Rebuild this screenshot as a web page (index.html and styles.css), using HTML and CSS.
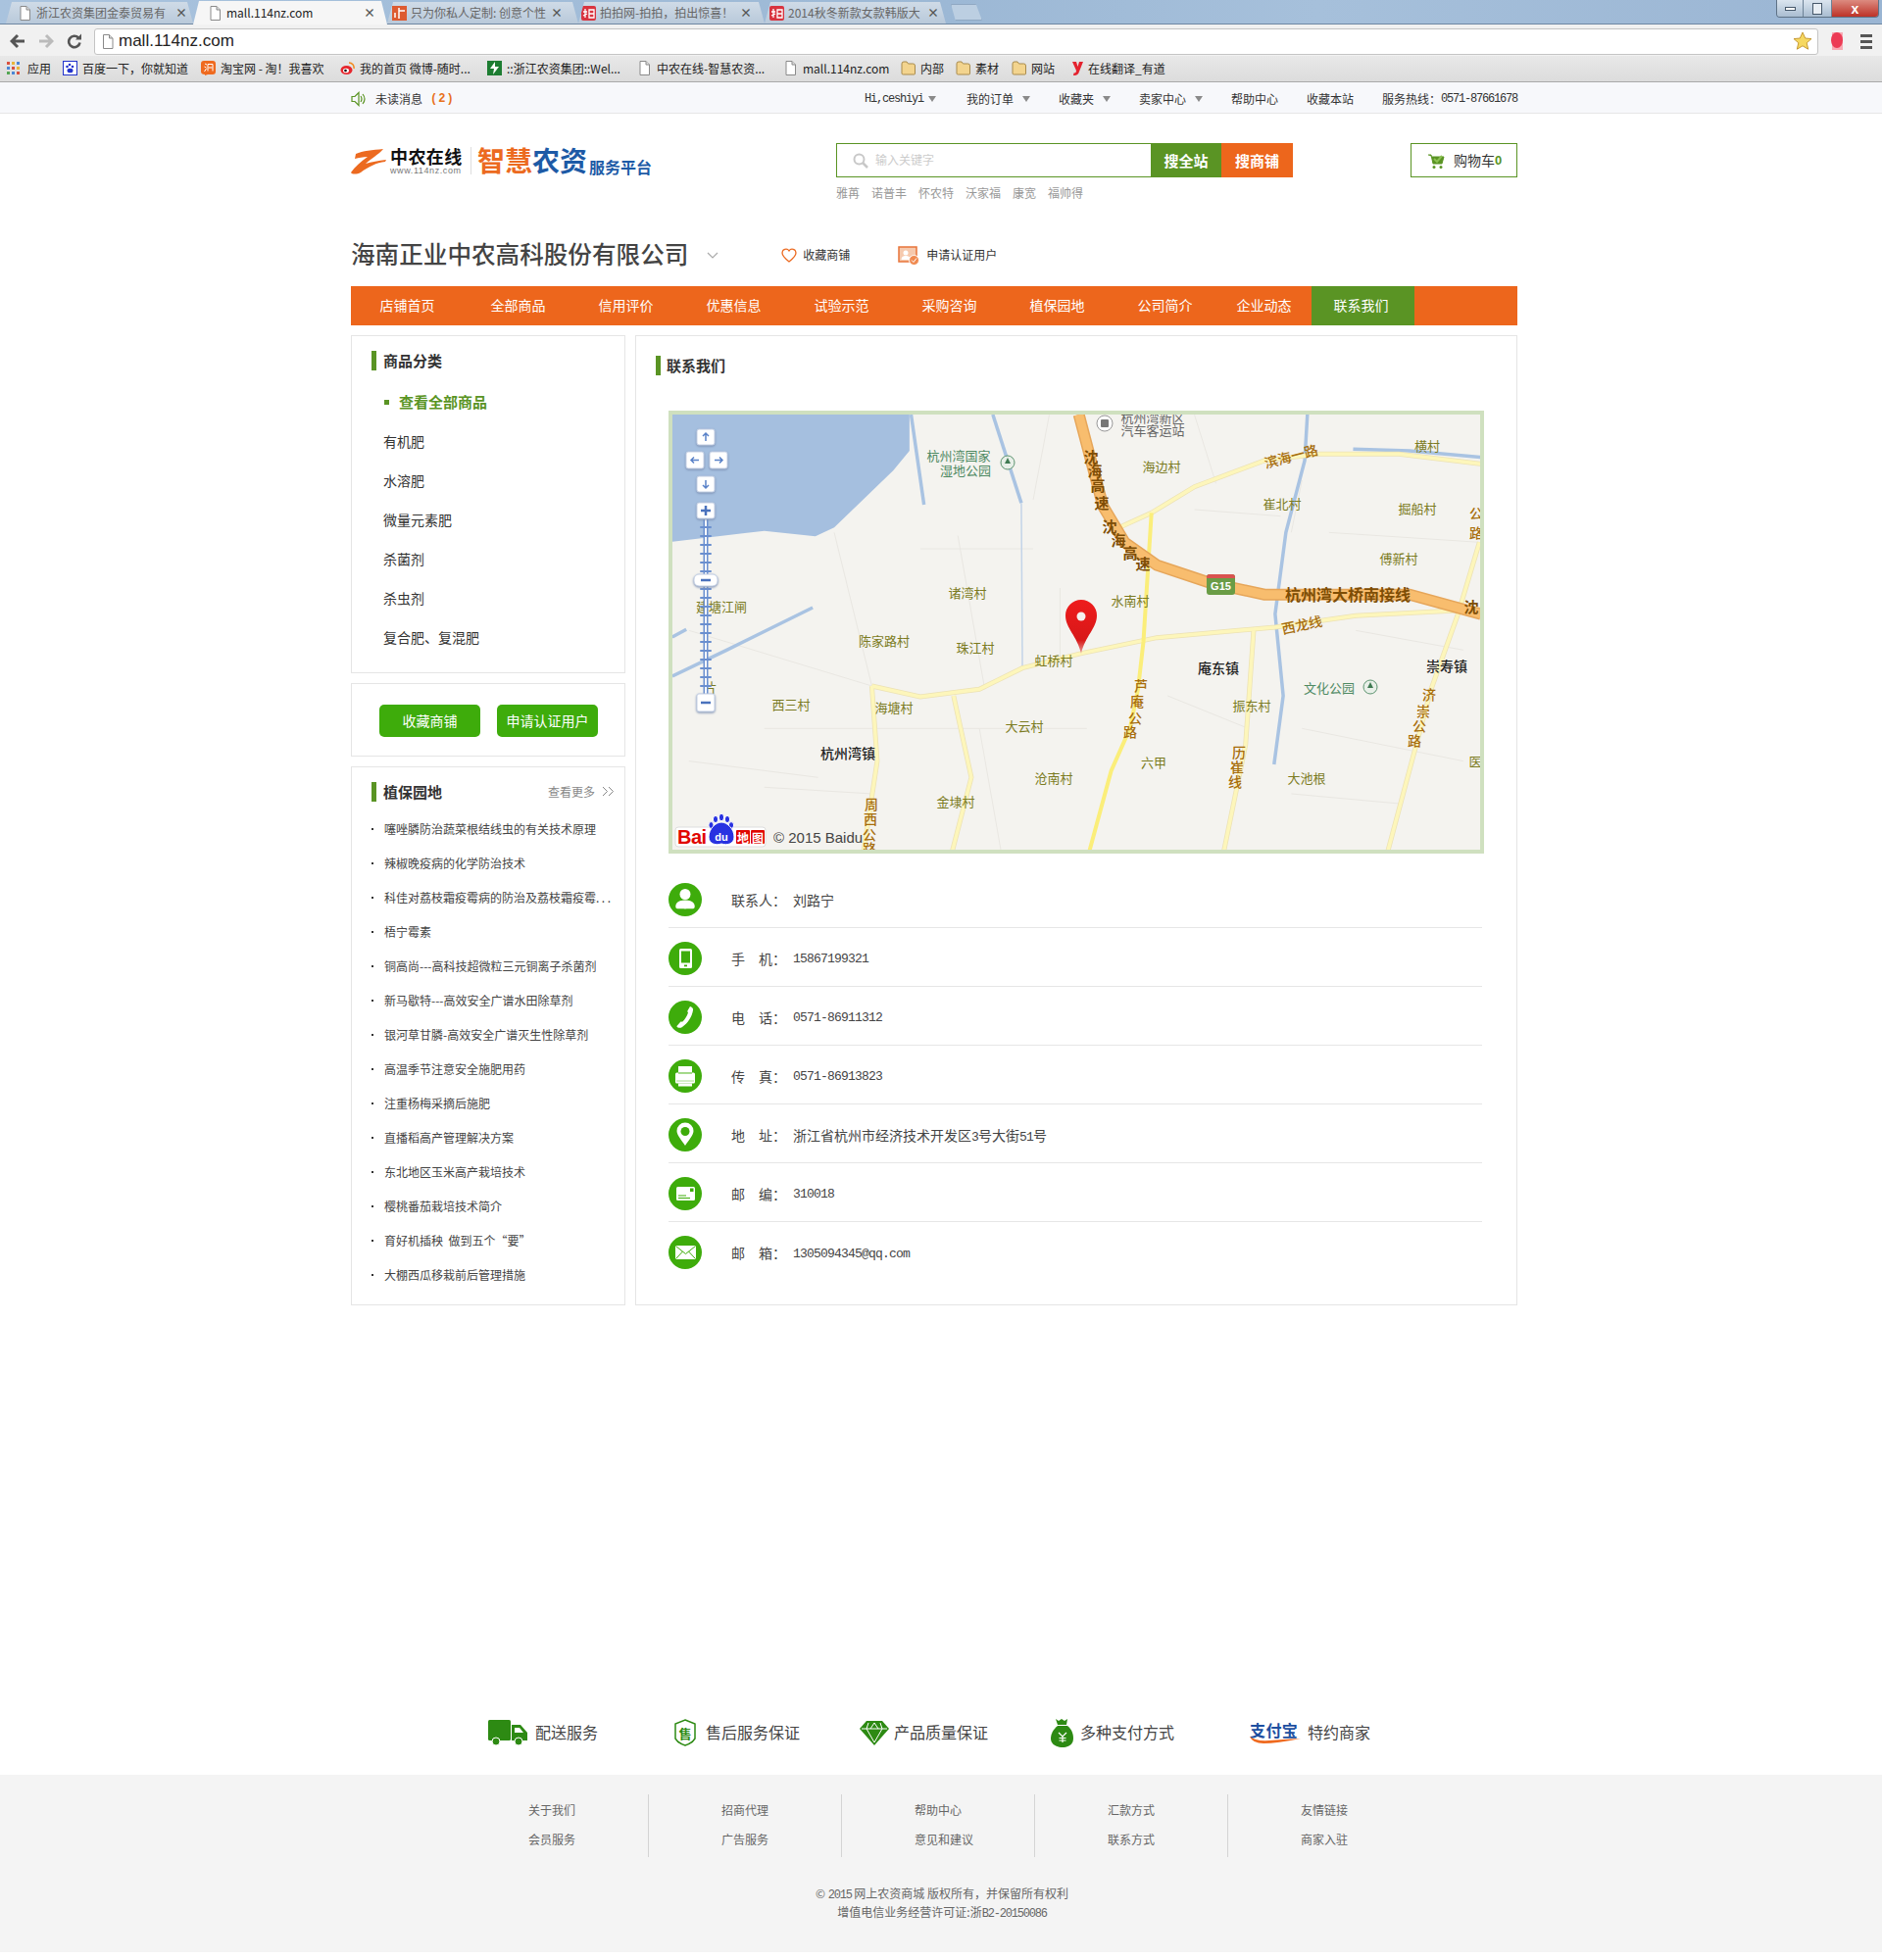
FILE: index.html
```html
<!DOCTYPE html>
<html lang="zh-CN">
<head>
<meta charset="utf-8">
<title>联系我们</title>
<link rel="stylesheet" href="styles.css">
</head>
<body>
<svg class="defs" width="0" height="0">
  <symbol id="doc" viewBox="0 0 12 15"><path d="M1.5 .5h6l3.5 3.5v10.500h-9.500z" fill="#fff" stroke="#8a8a8a"/><path d="M7.500 .5v3.500h3.500" fill="#ddd" stroke="#8a8a8a"/></symbol>
  <symbol id="folder" viewBox="0 0 15 15"><path d="M1 3q0-2 2-2h3l1.500 2h5q2 0 2 2v8q0 1-1 1h-11q-1.500 0-1.500-1z" fill="#f3d48e" stroke="#a98b4d"/></symbol>
  <symbol id="hong" viewBox="0 0 15 15"><rect width="15" height="15" rx="2" fill="#d8343f"/><path d="M4 3v9M2 6h4M2 10l4-2M8 4h5v8h-5zM8 8h5" stroke="#fff" fill="none" stroke-width="1.300"/></symbol>
</svg>

<div class="tabstrip">
  <div class="tab tab1"><svg class="tabicon"><use href="#doc"/></svg><span class="tabtext">浙江农资集团金泰贸易有</span><span class="tabx">×</span></div>
  <div class="tab tab-active"><svg class="tabicon"><use href="#doc"/></svg><span class="tabtext">mall.114nz.com</span><span class="tabx">×</span></div>
  <div class="tab tab3"><svg class="tabicon" viewBox="0 0 15 15"><rect width="15" height="15" fill="#dd5b31"/><path d="M7 2v11M7 5h6M3 7v5" stroke="#fff" stroke-width="1.500" fill="none"/></svg><span class="tabtext">只为你私人定制: 创意个性</span><span class="tabx">×</span></div>
  <div class="tab tab4"><svg class="tabicon"><use href="#hong"/></svg><span class="tabtext">拍拍网-拍拍，拍出惊喜！</span><span class="tabx">×</span></div>
  <div class="tab tab5"><svg class="tabicon"><use href="#hong"/></svg><span class="tabtext">2014秋冬新款女款韩版大</span><span class="tabx">×</span></div>
  <div class="tab-new"></div>
  <div class="winctl">
    <span class="win win-min"><i class="win-min-bar"></i></span>
    <span class="win win-max"><i class="win-max-box"></i></span>
    <span class="win win-close">x</span>
  </div>
</div>

<div class="toolbar">
  <svg class="navicon" viewBox="0 0 16 16"><path d="M8 2 2 8l6 6M2.500 8H15" fill="none" stroke="#555" stroke-width="3"/></svg>
  <svg class="navicon navicon-off" viewBox="0 0 16 16"><path d="m8 2 6 6-6 6M13.500 8H1" fill="none" stroke="#bbb" stroke-width="3"/></svg>
  <svg class="navicon" viewBox="0 0 16 16"><path d="M13.500 9.500a5.700 5.700 0 1 1-1.500-5" fill="none" stroke="#555" stroke-width="2.600"/><path d="M9 6.500h6v-6z" fill="#555"/></svg>
  <div class="addr">
    <svg class="addr-doc"><use href="#doc"/></svg>
    <span class="addr-text">mall.114nz.com</span>
    <svg class="addr-star" viewBox="0 0 20 20"><path d="m10 1 2.700 6 6.300.6-4.800 4.200 1.500 6.400L10 14.800l-5.700 3.400 1.500-6.400L1 7.600 7.300 7z" fill="#f6d860" stroke="#c79a35"/></svg>
  </div>
  <svg class="ext" viewBox="0 0 16 20"><path d="M3 1h11v18H3z" fill="#f7aab4"/><ellipse cx="8" cy="9" rx="6" ry="8" fill="#ec3b55"/></svg>
  <div class="burger"><i></i><i></i><i></i></div>
</div>

<div class="bookmarks">
  <span class="bm bm-apps"><svg class="bmicon" viewBox="0 0 13 13"><g fill="#d9503f"><rect width="3" height="3"/><rect x="5" width="3" height="3" fill="#e9b63a"/><rect x="10" width="3" height="3" fill="#4b87d6"/><rect y="5" width="3" height="3" fill="#4b87d6"/><rect x="5" y="5" width="3" height="3"/><rect x="10" y="5" width="3" height="3" fill="#e9b63a"/><rect y="10" width="3" height="3" fill="#53a653"/><rect x="5" y="10" width="3" height="3" fill="#4b87d6"/><rect x="10" y="10" width="3" height="3"/></g></svg>应用</span>
  <span class="bm bm-baidu"><svg class="bmicon" viewBox="0 0 15 15"><rect x=".5" y=".5" width="14" height="14" fill="#fff" stroke="#2233cc"/><circle cx="4.500" cy="6" r="1.300" fill="#2233cc"/><circle cx="7" cy="4" r="1.300" fill="#2233cc"/><circle cx="10" cy="6" r="1.300" fill="#2233cc"/><ellipse cx="7.500" cy="10" rx="3" ry="2.300" fill="#2233cc"/></svg>百度一下，你就知道</span>
  <span class="bm bm-tb"><svg class="bmicon" viewBox="0 0 15 15"><path d="M3 0h9q3 0 3 3v8q0 3-3 3H7l-3 1v-1q-4 0-4-3V3q0-3 3-3z" fill="#ef6a1f"/><path d="M4 3l2 1M3.500 6l2 1M3.500 11l2-3M7 3.500h5M7 3.500v7M12 3.500v7M7.500 7h4" stroke="#fff" fill="none"/></svg>淘宝网 - 淘！我喜欢</span>
  <span class="bm bm-wb"><svg class="bmicon" viewBox="0 0 15 15"><ellipse cx="6.500" cy="9.500" rx="6" ry="4.500" fill="#e6262d"/><ellipse cx="6" cy="10" rx="3" ry="2.300" fill="#fff"/><circle cx="5.500" cy="10" r="1.300"/><path d="M9 2a5 5 0 0 1 5 6" fill="none" stroke="#f28a1e" stroke-width="1.500"/></svg>我的首页 微博-随时...</span>
  <span class="bm bm-zj"><svg class="bmicon" viewBox="0 0 15 15"><rect width="15" height="15" fill="#1d7d32"/><path d="M8 1 3 8h4l-1 6 6-8H8z" fill="#fff"/></svg>::浙江农资集团::Wel...</span>
  <span class="bm bm-zn"><svg class="bmicon"><use href="#doc"/></svg>中农在线-智慧农资...</span>
  <span class="bm bm-ml"><svg class="bmicon"><use href="#doc"/></svg>mall.114nz.com</span>
  <span class="bm bm-nb"><svg class="bmicon"><use href="#folder"/></svg>内部</span>
  <span class="bm bm-sc"><svg class="bmicon"><use href="#folder"/></svg>素材</span>
  <span class="bm bm-wz"><svg class="bmicon"><use href="#folder"/></svg>网站</span>
  <span class="bm bm-yd"><svg class="bmicon" viewBox="0 0 15 15"><path d="M2 1h4l1.500 5L9 1h4L9 11q-1 4-5 4H3l.5-2.500Q6 13 6 10z" fill="#e4232f"/></svg>在线翻译_有道</span>
</div>

<div class="topbar">
  <div class="wrap topbar-in">
    <svg class="speaker" viewBox="0 0 16 16"><path d="M1 5.500h3l4-4v13l-4-4H1z" fill="none" stroke="#5a9424" stroke-width="1.200"/><path d="M10 5q2 3 0 6M12 3q4 5 0 10" fill="none" stroke="#5a9424" stroke-width="1.200"/></svg>
    <span class="msg">未读消息</span><span class="msg-count">(2)</span>
    <nav class="toplinks">
      <span class="tl tl-hi"><span class="mono">Hi,ceshiyi</span><i class="caret"></i></span>
      <span class="tl tl-wide">我的订单<i class="caret"></i></span>
      <span class="tl">收藏夹<i class="caret"></i></span>
      <span class="tl">卖家中心<i class="caret"></i></span>
      <span class="tl">帮助中心</span>
      <span class="tl">收藏本站</span>
      <span class="tl">服务热线：<span class="mono">0571-87661678</span></span>
    </nav>
  </div>
</div>

<div class="wrap">
  <header class="header">
    <div class="logo">
      <svg class="logo-z" viewBox="0 0 36 26"><path d="M5 5C12 2 22 1 33 0 28 6 20 10 15 15 21 13 28 12 36 11L35 13C26 14 18 18 10 24 6 26 1 26 0 24 4 18 10 13 17 8 12 8 8 9 4 10Z" fill="#ec6a20"/></svg>
      <div class="logo-cn">
        <div class="logo-name">中农在线</div>
        <div class="logo-url">www.114nz.com</div>
      </div>
      <span class="logo-sep"></span>
      <span class="logo-a">智慧</span><span class="logo-b">农资</span><span class="logo-c">服务平台</span>
    </div>
    <div class="search">
      <div class="search-row">
        <div class="search-input">
          <svg class="search-ico" viewBox="0 0 16 16"><circle cx="6.500" cy="6.500" r="5" fill="none" stroke="#c8c8c8" stroke-width="2"/><path d="m10 10 5 5" stroke="#c8c8c8" stroke-width="2.500"/></svg>
          <span>输入关键字</span>
        </div>
        <span class="sbtn sbtn-g">搜全站</span>
        <span class="sbtn sbtn-o">搜商铺</span>
      </div>
      <div class="hot"><span>雅苒</span><span>诺普丰</span><span>怀农特</span><span>沃家福</span><span>康宽</span><span>福帅得</span></div>
    </div>
    <div class="cart">
      <svg class="cart-ico" viewBox="0 0 18 18"><path d="M1 3h3l2 9h9l2-7H5" fill="#5a9424" stroke="#5a9424"/><path d="m7 7 3 3 5-6" fill="none" stroke="#8cc152" stroke-width="2"/><circle cx="7" cy="15.500" r="1.500" fill="#5a9424"/><circle cx="14" cy="15.500" r="1.500" fill="#5a9424"/></svg>
      <span>购物车</span><b class="cart-n">0</b>
    </div>
  </header>

  <div class="shop">
    <h1 class="shop-name">海南正业中农高科股份有限公司</h1>
    <svg class="shop-chev" viewBox="0 0 12 8"><path d="m1 1 5 5 5-5" fill="none" stroke="#aaa" stroke-width="1.200"/></svg>
    <span class="shop-act shop-fav"><svg class="heart" viewBox="0 0 16 15"><path d="M8 14C3 10 1 7.500 1 5a3.800 3.800 0 0 1 7-2 3.800 3.800 0 0 1 7 2c0 2.500-2 5-7 9z" fill="none" stroke="#ec6a20" stroke-width="1.300"/></svg>收藏商铺</span>
    <span class="shop-act shop-cert"><svg class="cert" viewBox="0 0 22 20"><rect x="1" y="1" width="18" height="15" fill="#f6c9ad" stroke="#e8743a" stroke-width="1.500"/><circle cx="8" cy="7" r="2.500" fill="#fff"/><path d="M3.500 14q0-4 4.500-4t4.500 4z" fill="#fff"/><circle cx="16.500" cy="14.500" r="5" fill="#f08a50" stroke="#fff"/><path d="m14 14.500 2 2 3-4" fill="none" stroke="#fff"/></svg>申请认证用户</span>
  </div>

  <nav class="mainnav">
    <a class="ni ni-1">店铺首页</a><a class="ni ni-2">全部商品</a><a class="ni">信用评价</a><a class="ni">优惠信息</a><a class="ni">试验示范</a><a class="ni">采购咨询</a><a class="ni">植保园地</a><a class="ni">公司简介</a><a class="ni ni-9">企业动态</a><a class="ni ni-on">联系我们</a>
  </nav>

  <div class="content">
    <aside class="side">
      <section class="box box-cat">
        <h3 class="ttl">商品分类</h3>
        <ul class="cat">
          <li class="cat-all">查看全部商品</li>
          <li>有机肥</li><li>水溶肥</li><li>微量元素肥</li><li>杀菌剂</li><li>杀虫剂</li><li>复合肥、复混肥</li>
        </ul>
      </section>
      <section class="box box-btn">
        <span class="gbtn">收藏商铺</span><span class="gbtn">申请认证用户</span>
      </section>
      <section class="box box-news">
        <div class="news-head">
          <h3 class="ttl">植保园地</h3>
          <span class="more">查看更多<svg class="more-ico" viewBox="0 0 13 11"><path d="m1 1 4.500 4.500L1 10M7 1l4.500 4.500L7 10" fill="none" stroke="#888"/></svg></span>
        </div>
        <ul class="news">
          <li>噻唑膦防治蔬菜根结线虫的有关技术原理</li>
          <li>辣椒晚疫病的化学防治技术</li>
          <li>科佳对荔枝霜疫霉病的防治及荔枝霜疫霉<span class="dots">...</span></li>
          <li>梧宁霉素</li>
          <li>铜高尚---高科技超微粒三元铜离子杀菌剂</li>
          <li>新马歇特---高效安全广谱水田除草剂</li>
          <li>银河草甘膦-高效安全广谱灭生性除草剂</li>
          <li>高温季节注意安全施肥用药</li>
          <li>注重杨梅采摘后施肥</li>
          <li>直播稻高产管理解决方案</li>
          <li>东北地区玉米高产栽培技术</li>
          <li>樱桃番茄栽培技术简介</li>
          <li>育好机插秧&nbsp;&nbsp;做到五个“要”</li>
          <li>大棚西瓜移栽前后管理措施</li>
        </ul>
      </section>
    </aside>

    <main class="panel">
      <h3 class="ttl ttl-panel">联系我们</h3>
      <div class="map">
        <svg class="map-svg" viewBox="0 0 824 444">
          <rect width="824" height="444" fill="#f4f3ef"/>
          <g transform="translate(-16,-13) scale(.5486,.3333)">
            <g class="grid">
              <path d="M330 400 400 870M560 410 610 880M490 450 700 450M750 570V800M60 700 400 870M200 1000H800M600 1000 640 1373M950 900 1100 1000M1200 240 1180 400M1250 400 1530 430M1200 1000 1500 1100M1000 330 1160 350M200 1180 400 1200M1300 700 1500 760M1180 1200 1380 1230M60 1100 300 1150M1000 40 1040 250M730 40 700 300"/>
            </g>
            <path class="water-fill" d="M29 39H470V150L440 210 330 385 295 412 200 395 29 428Z"/>
            <g class="water">
              <path d="M473 39 497 315"/>
              <path d="M625 39 678 310"/>
              <path d="M1210 39 1205 180 1170 400 1150 650 1165 900 1148 1110"/>
              <path d="M1295 145 1400 150 1533 170"/>
              <path d="M29 840 130 760 290 630"/>
              <path d="M29 720 55 697"/>
            </g>
            <path class="water-thin" d="M678 310 680 810"/>
            <g class="road-case">
              <path d="M400 870 490 903 600 880 680 815 790 770 930 722 1150 690 1300 655 1533 635"/>
              <path d="M860 385 920 340 1000 260 1130 180 1230 160 1380 160 1533 190"/>
              <path d="M400 870 410 1100 385 1373"/>
              <path d="M552 900 585 1150 550 1373"/>
              <path d="M1110 700 1095 1050 1055 1373"/>
              <path d="M1530 430 1490 650 1440 880 1360 1373"/>
            </g>
            <g class="road">
              <path d="M400 870 490 903 600 880 680 815 790 770 930 722 1150 690 1300 655 1533 635"/>
              <path d="M860 385 920 340 1000 260 1130 180 1230 160 1380 160 1533 190"/>
              <path d="M400 870 410 1100 385 1373"/>
              <path d="M552 900 585 1150 550 1373"/>
              <path d="M1110 700 1095 1050 1055 1373"/>
              <path d="M1530 430 1490 650 1440 880 1360 1373"/>
            </g>
            <path class="road-y" d="M920 340 905 735 895 880 880 1000 845 1130 805 1373"/>
            <path class="hw-case" d="M785 39 830 320 870 430 930 500 1030 555 1130 590 1400 590 1533 650"/>
            <path class="hw" d="M785 39 830 320 870 430 930 500 1030 555 1130 590 1400 590 1533 650"/>
          </g>

          <text class="mt mc" x="490" y="2">杭州湾新区</text>
          <text class="mt mc" x="490" y="15">汽车客运站</text>
          <circle cx="441" cy="9" r="8" fill="#fff" stroke="#999"/><rect x="437" y="5" width="8" height="8" rx="1" fill="#777"/>
          <text class="mt mg" x="292" y="41">杭州湾国家</text>
          <text class="mt mg" x="299" y="56">湿地公园</text>
          <circle cx="342" cy="49" r="7" fill="#e8efe8" stroke="#5d9470"/><path d="m342 44 3 6h-6z" fill="#3f7a52"/>
          <text class="mt" x="499" y="52">海边村</text>
          <text class="mt mo" x="631" y="42" transform="rotate(-15 631 42)">滨海一路</text>
          <text class="mt" x="770" y="31">横村</text>
          <text class="mt" x="622" y="90">崔北村</text>
          <text class="mt" x="760" y="95">掘船村</text>
          <text class="mt" x="741" y="146">傅新村</text>
          <text class="mt" x="301" y="181">诸湾村</text>
          <text class="mt" x="467" y="189">水南村</text>
          <text class="mt" x="50" y="195">建塘江闸</text>
          <text class="mt" x="216" y="230">陈家路村</text>
          <text class="mt" x="309" y="237">珠江村</text>
          <text class="mt" x="389" y="250">虹桥村</text>
          <text class="mt mk" x="557" y="258">庵东镇</text>
          <text class="mt mk" x="790" y="256">崇寿镇</text>
          <text class="mt mg" x="670" y="278">文化公园</text>
          <circle cx="712" cy="278" r="7" fill="#e8efe8" stroke="#5d9470"/><path d="m712 273 3 6h-6z" fill="#3f7a52"/>
          <text class="mt" x="591" y="296">振东村</text>
          <text class="mt" x="121" y="295">西三村</text>
          <text class="mt" x="226" y="298">海塘村</text>
          <text class="mt" x="359" y="317">大云村</text>
          <text class="mt mk" x="179" y="345">杭州湾镇</text>
          <text class="mt" x="491" y="354">六甲</text>
          <text class="mt" x="389" y="370">沧南村</text>
          <text class="mt" x="647" y="370">大池根</text>
          <text class="mt" x="289" y="394">金埭村</text>
          <text class="mt" x="819" y="353">医</text>
          <text class="mt" x="39" y="277">片</text>

          <text class="mt mh mh-l" x="689" y="183">杭州湾大桥南接线</text>
          <text class="mt mh" x="815" y="195">沈</text>
          <text class="mt mh" x="427" y="42">沈</text><text class="mt mh" x="431" y="56">海</text><text class="mt mh" x="434" y="71">高</text><text class="mt mh" x="438" y="89">速</text>
          <text class="mt mh" x="446" y="113">沈</text><text class="mt mh" x="455" y="127">海</text><text class="mt mh" x="467" y="140">高</text><text class="mt mh" x="480" y="151">速</text>
          <text class="mt mo" x="642" y="214" transform="rotate(-12 642 214)">西龙线</text>
          <text class="mt mo" x="478" y="276">芦</text><text class="mt mo" x="474" y="292">庵</text><text class="mt mo" x="472" y="309">公</text><text class="mt mo" x="467" y="323">路</text>
          <text class="mt mo" x="578" y="344">历</text><text class="mt mo" x="576" y="359">崔</text><text class="mt mo" x="574" y="374">线</text>
          <text class="mt mo" x="203" y="397">周</text><text class="mt mo" x="202" y="412">西</text><text class="mt mo" x="201" y="428">公</text><text class="mt mo" x="201" y="442">路</text>
          <text class="mt mo" x="772" y="285">济</text><text class="mt mo" x="766" y="302">崇</text><text class="mt mo" x="762" y="317">公</text><text class="mt mo" x="757" y="332">路</text>
          <text class="mt mo" x="820" y="100">公</text><text class="mt mo" x="820" y="120">路</text>

          <rect x="545" y="163" width="29" height="21" rx="3" fill="#6a9c46"/>
          <path d="M545 166q0-3 3-3h23q3 0 3 3v1h-29z" fill="#d9534f"/>
          <text class="mt shield" x="559.500" y="175">G15</text>

          <g class="zoomctl">
            <path class="slider" d="M34 107V285"/>
            <path class="slider-in" d="M34 107V285"/>
            <path class="slider-dash" d="M29 115H39M29 124H39M29 133H39M29 142H39M29 151H39M29 160H39M29 178H39M29 187H39M29 196H39M29 205H39M29 214H39M29 223H39M29 232H39M29 241H39M29 250H39M29 259H39M29 268H39M29 277H39"/>
            <rect class="zbtn" x="25" y="15" width="18" height="16" rx="2"/>
            <rect class="zbtn" x="14" y="38" width="18" height="17" rx="2"/>
            <rect class="zbtn" x="38" y="38" width="18" height="17" rx="2"/>
            <rect class="zbtn" x="25" y="63" width="18" height="16" rx="2"/>
            <rect class="zbtn" x="25" y="90" width="18" height="16" rx="2"/>
            <rect class="zbtn" x="25" y="285" width="18" height="18" rx="2"/>
            <rect class="zbtn" x="22" y="163" width="24" height="12" rx="5"/>
            <path class="zarrow" d="M34 19V27M31 22l3-3 3 3M19 46.500H27M22 43.500l-3 3 3 3M43 46.500H51M48 43.500l3 3-3 3M34 67V75M31 72l3 3 3-3"/>
            <path class="zsign" d="M29 98H39M34 93V103M29 294H39M29 169H39"/>
          </g>

          <g class="pin">
            <path d="M417 244C413 226 401 218 401 205A16 16 0 0 1 433 205C433 218 421 226 417 244Z" fill="url(#pg)"/>
            <circle cx="417" cy="206" r="4.500" fill="#f6f0ee"/>
          </g>
          <defs>
            <linearGradient id="pg" x1="0" y1="0" x2="0" y2="1"><stop offset="0" stop-color="#ee1c1c"/><stop offset=".75" stop-color="#d81818"/><stop offset="1" stop-color="#e8a09c"/></linearGradient>
          </defs>

          <g class="baidu">
            <rect x="3" y="421" width="92" height="20" rx="3" fill="#fff" stroke="#ddd"/>
            <text class="bd-bai" x="5" y="438">Bai</text>
            <g fill="#2932e1" stroke="#fff">
              <ellipse cx="44" cy="413" rx="2.600" ry="3.600"/><ellipse cx="50" cy="411" rx="2.600" ry="3.800"/><ellipse cx="56" cy="413" rx="2.600" ry="3.600"/><ellipse cx="39.500" cy="419" rx="2.600" ry="3.400"/><ellipse cx="60" cy="419" rx="2.600" ry="3.400"/>
              <path d="M50 416c-6 0-13 7-13 15 0 7 7 9 13 7 6 2 13 0 13-7 0-8-7-15-13-15z"/>
            </g>
            <text class="bd-du" x="50" y="435">du</text>
            <rect x="65" y="424" width="14" height="14" fill="#e10601" rx="1"/><text class="bd-map" x="72" y="431.500">地</text>
            <rect x="80" y="424" width="14" height="14" fill="#e10601" rx="1"/><text class="bd-map" x="87" y="431.500">图</text>
            <text class="bd-c" x="103" y="437">© 2015 Baidu</text>
          </g>
        </svg>
      </div>

      <div class="contact">
        <div class="row"><svg class="cico" viewBox="0 0 34 34"><circle cx="17" cy="17" r="17"/><circle class="w" cx="17" cy="11.500" r="5.500"/><path class="w" d="M8 26c-1-1-1-3 0-5 2-3 5-3.500 9-3.500s7 .5 9 3.500c1 2 1 4 0 5-1 .5-17 .5-18 0z"/></svg><span class="lb">联系人：</span><span class="val">刘路宁</span></div>
        <div class="row"><svg class="cico" viewBox="0 0 34 34"><circle cx="17" cy="17" r="17"/><rect class="w" x="11" y="7" width="13" height="20" rx="1.500"/><rect x="13" y="9.500" width="9" height="12"/><rect x="16" y="23.500" width="3" height="1.800"/></svg><span class="lb">手　机：</span><span class="num">15867199321</span></div>
        <div class="row"><svg class="cico" viewBox="0 0 34 34"><circle cx="17" cy="17" r="17"/><path class="w" d="M22 6c2.500 1 3.500 2 3 4-1 6-5 13-11 17-1.500 1-3 1-4.500.5-.8-.5-1.200-1.200-1-1.500l3.500-4c.5-.5 1-.5 2-.2 2.500-2 5-6 6-9.500-.5-.5-1-1-.5-2z"/></svg><span class="lb">电　话：</span><span class="num">0571-86911312</span></div>
        <div class="row"><svg class="cico" viewBox="0 0 34 34"><circle cx="17" cy="17" r="17"/><path class="w" d="M10 7h14v6H10z"/><path class="w" d="M7 15q0-1.500 1.500-1.500h17Q27 13.500 27 15v8q0 1.500-1.500 1.500h-17Q7 24.500 7 23z"/><rect class="w" x="10" y="24.500" width="14" height="3"/><path d="M10 14.500h14M8 22h18" stroke="#a8dc8e" fill="none"/></svg><span class="lb">传　真：</span><span class="num">0571-86913823</span></div>
        <div class="row"><svg class="cico" viewBox="0 0 34 34"><circle cx="17" cy="17" r="17"/><path class="w" d="M17 28C13 22 8.500 17 8.500 13a8.500 8.500 0 0 1 17 0c0 4-4.500 9-8.500 15z"/><circle cx="17" cy="13.500" r="4.500"/></svg><span class="lb">地　址：</span><span class="val">浙江省杭州市经济技术开发区<span class="num">3</span>号大街<span class="num">51</span>号</span></div>
        <div class="row"><svg class="cico" viewBox="0 0 34 34"><circle cx="17" cy="17" r="17"/><rect class="w" x="8" y="10" width="19" height="14" rx="1.500"/><rect x="22" y="11.500" width="3.500" height="3.500"/><path d="M10 19h8M10 21.500h12" stroke="#3eac0b" fill="none"/></svg><span class="lb">邮　编：</span><span class="num">310018</span></div>
        <div class="row"><svg class="cico" viewBox="0 0 34 34"><circle cx="17" cy="17" r="17"/><rect class="w" x="7" y="10" width="21" height="14" rx="1"/><path d="m7.500 10.500 10 8 10-8M7.500 23.500l7-7.500M27.500 23.500l-7-7.500" stroke="#3eac0b" fill="none"/></svg><span class="lb">邮　箱：</span><span class="num">1305094345@qq.com</span></div>
      </div>
    </main>
  </div>
</div>

<div class="services">
  <span class="svc svc-1"><svg class="svc-truck" viewBox="0 0 40 26"><rect y="0" width="23" height="21" rx="1.500"/><path d="M24 5h9l7 8v8H24z"/><path d="M27 8h5l4 5h-9z" fill="#fff"/><circle cx="8" cy="22" r="4" stroke="#fff"/><circle cx="31" cy="22" r="4" stroke="#fff"/></svg>配送服务</span>
  <span class="svc svc-2"><svg class="svc-shield" viewBox="0 0 22 28"><path d="M11 1 21 5v15q-3 5-10 7Q4 25 1 20V5z" fill="#fff" stroke="#2d8a13" stroke-width="1.500"/><text class="shield-t" x="11" y="14">售</text></svg>售后服务保证</span>
  <span class="svc svc-3"><svg class="svc-gem" viewBox="0 0 30 26"><path d="M7 1h16l7 8-15 17L0 9z"/><path d="M2 9h26M9 3 7 9l8 14 8-14-2-6M15 3 11 9M15 3l4 6" fill="none" stroke="#fff"/></svg>产品质量保证</span>
  <span class="svc svc-4"><svg class="svc-bag" viewBox="0 0 23 30"><path d="M5 1l3 2 3-2 3 2 3-2-1 6H7z"/><path d="M7 8h10c5 4 6 9 6 13 0 6-5 9-11 9S0 27 0 21c0-4 2-9 7-13z"/><path d="m8 15 4 4 4-4M12 19v6M8.500 20.500h7M8.500 23h7" fill="none" stroke="#fff" stroke-width="1.200"/></svg>多种支付方式</span>
  <span class="svc svc-5"><span class="alipay"><span class="alipay-t">支付宝</span><svg class="alipay-s" viewBox="0 0 52 10"><path d="M0 2Q3 9 14 9q14 0 38-5-20 1-32 2Q6 7 0 2z" fill="#ef6a1f"/></svg></span>特约商家</span>
</div>

<footer class="footer">
  <div class="fcols">
    <div class="fcol"><a>关于我们</a><a>会员服务</a></div>
    <div class="fcol"><a>招商代理</a><a>广告服务</a></div>
    <div class="fcol"><a>帮助中心</a><a>意见和建议</a></div>
    <div class="fcol"><a>汇款方式</a><a>联系方式</a></div>
    <div class="fcol"><a>友情链接</a><a>商家入驻</a></div>
  </div>
  <p class="copy">© <span class="mono">2015</span> 网上农资商城 版权所有，并保留所有权利</p>
  <p class="copy">增值电信业务经营许可证:浙<span class="mono">B2-20150086</span></p>
</footer>
</body>
</html>
```

FILE: styles.css
```css
* { box-sizing: border-box; }
html, body { margin: 0; padding: 0; }
body {
  width: 1920px;
  height: 2000px;
  overflow: hidden;
  background: #fff;
  color: #333;
  font: 12px/1.4 "Noto Sans CJK SC", "Liberation Sans", sans-serif;
}
h1, h3, p, ul { margin: 0; padding: 0; font-weight: normal; }
ul { list-style: none; }
.defs { position: absolute; }
.wrap { width: 1190px; margin-left: 358px; }
.mono { font: 12px "Liberation Mono", monospace; letter-spacing: -1.200px; }

/* browser chrome */
.tabstrip {
  display: flex;
  align-items: flex-end;
  height: 25px;
  padding-left: 6px;
  background: linear-gradient(90deg, #a9c3de, #9cb8d5 50%, #a6c0db 70%, #9ab5d3);
  border-bottom: 1px solid #6f88a3;
}
.tab {
  display: flex;
  align-items: center;
  flex: none;
  width: 191px;
  height: 22px;
  background: linear-gradient(#cfdbe7, #b9c9da);
  clip-path: polygon(0 100%, 6px 0, calc(100% - 6px) 0, 100% 100%);
  color: #666;
}
.tab1 { padding: 0 5px 0 12px; }
.tab-active { width: 198px; height: 24px; background: #f6f6f6; color: #222; margin-bottom: -1px; padding: 0 11px 0 15px; }
.tab3 { width: 195px; padding: 0 15px 0 5px; }
.tab4 { width: 190px; padding: 0 12px 0 3px; }
.tab5 { width: 185px; padding: 0 6px 0 5px; }
.tabicon { flex: none; width: 15px; height: 15px; margin-right: 4px; }
.tabtext { flex: 1; min-width: 0; white-space: nowrap; font-size: 12px; }
.tabx { flex: none; width: 14px; text-align: center; font-weight: 700; color: #555; }
.tab-new {
  width: 32px;
  height: 17px;
  margin: 0 0 3px 5px;
  background: #bccfe2;
  border: 1px solid #8fa8c2;
  clip-path: polygon(0 0, 80% 0, 100% 100%, 15% 100%);
}
.winctl {
  display: flex;
  align-self: flex-start;
  margin-left: auto;
  margin-right: 3px;
  height: 18px;
  border: 1px solid #5e7286;
  border-top: 0;
  border-radius: 0 0 4px 4px;
  overflow: hidden;
}
.win { display: flex; align-items: center; justify-content: center; height: 100%; background: linear-gradient(#dbe5ef, #a9bdd1); border-right: 1px solid #6d8297; }
.win-min { width: 27px; }
.win-max { width: 29px; }
.win-close { width: 47px; border: 0; background: linear-gradient(#dc8b80, #bd3227); color: #fff; font: 700 14px "Liberation Sans", sans-serif; }
.win-min-bar { width: 11px; height: 4px; background: #fff; border: 1px solid #46586a; }
.win-max-box { width: 10px; height: 12px; background: #e8eef4; border: 1px solid #46586a; }

.toolbar {
  display: flex;
  align-items: center;
  height: 32px;
  padding: 2px 8px 0 10px;
  background: #f1f1f1;
}
.navicon { flex: none; width: 16px; height: 16px; margin-right: 13px; }
.addr {
  display: flex;
  align-items: center;
  flex: none;
  width: 1759px;
  height: 27px;
  margin-left: -1px;
  padding: 0 5px 0 7px;
  background: #fff;
  border: 1px solid #c4c4c4;
  border-radius: 3px;
}
.addr-doc { width: 12px; height: 15px; margin-right: 5px; flex: none; }
.addr-text { font: 17px "Liberation Sans", sans-serif; color: #222; }
.addr-star { width: 20px; height: 20px; margin-left: auto; }
.ext { flex: none; width: 16px; height: 20px; margin-left: 11px; }
.burger { display: flex; flex-direction: column; gap: 3px; margin-left: 16px; }
.burger i { display: block; width: 12px; height: 3px; background: #555; }

.bookmarks {
  display: flex;
  align-items: center;
  height: 27px;
  background: linear-gradient(#e8e8e8, #dcdcdc);
  border-bottom: 1px solid #a9a9a9;
  color: #222;
  white-space: nowrap;
}
.bm { display: flex; align-items: center; flex: none; }
.bmicon { flex: none; width: 15px; height: 15px; margin-right: 5px; }
.bm-apps { margin-left: 7px; width: 57px; }
.bm-apps .bmicon { width: 13px; height: 13px; margin-right: 8px; }
.bm-baidu { width: 141px; }
.bm-tb { width: 142px; }
.bm-wb { width: 150px; }
.bm-zj { width: 153px; }
.bm-zn { width: 149px; }
.bm-ml { width: 120px; }
.bm-nb { width: 56px; }
.bm-sc { width: 57px; }
.bm-wz { width: 60px; }
.bm-yd { width: 100px; }
.bm-yd .bmicon { margin-right: 3px; }

.topbar { height: 32px; background: #f7f8fb; border-bottom: 1px solid #e6e6e6; }
.topbar-in { display: flex; align-items: center; height: 100%; padding-top: 3px; }
.speaker { flex: none; width: 16px; height: 16px; margin-right: 9px; }
.msg { color: #333; }
.msg-count { margin-left: 8px; color: #e8701a; font: 700 12px "Liberation Mono", monospace; letter-spacing: 1px; }
.toplinks { display: flex; align-items: center; gap: 29px; margin-left: auto; color: #333; white-space: nowrap; }
.tl { display: flex; align-items: center; }
.tl-hi .caret { margin-left: 5px; }
.tl-wide { margin-left: 2px; }
.caret { display: block; width: 0; height: 0; margin-left: 9px; border: 4px solid transparent; border-top: 6px solid #8a8a8a; border-bottom: 0; }

/* header */
.header { display: flex; align-items: flex-start; height: 109px; padding-top: 30px; }
.logo { display: flex; align-items: center; flex: none; width: 495px; height: 35px; }
.logo-z { flex: none; width: 36px; height: 26px; margin-top: 2px; }
.logo-cn { flex: none; width: 82px; margin-left: 4px; }
.logo-name { font-size: 18px; font-weight: 700; line-height: 20px; color: #111; letter-spacing: .4px; }
.logo-url { font: 9px/10px "Liberation Sans", sans-serif; color: #777; letter-spacing: .6px; }
.logo-sep { flex: none; width: 1px; height: 28px; margin-right: 6px; background: #ddd; }
.logo-a, .logo-b { font-size: 28px; font-weight: 700; line-height: 35px; }
.logo-a { color: #ec6a20; }
.logo-b { color: #1d5aa6; }
.logo-c { margin: 12px 0 0 2px; font-size: 16px; font-weight: 700; line-height: 20px; color: #1d5aa6; }
.search { flex: none; width: 466px; }
.search-row { display: flex; height: 35px; }
.search-input { display: flex; align-items: center; width: 321px; padding-left: 16px; border: 1.5px solid #5a9424; border-right: 0; color: #ccc; }
.search-ico { width: 16px; height: 16px; margin-right: 7px; }
.sbtn { display: flex; align-items: center; justify-content: center; color: #fff; font-size: 15px; font-weight: 700; }
.sbtn-g { width: 72px; background: #5a9424; }
.sbtn-o { width: 73px; background: #ed661c; }
.hot { display: flex; gap: 12px; margin-top: 7px; color: #999; line-height: 17px; }
.cart { display: flex; align-items: center; width: 109px; height: 35px; margin-left: auto; padding-left: 16px; border: 1.5px solid #5a9424; font-size: 14px; color: #333; }
.cart-ico { width: 18px; height: 18px; margin-right: 9px; }
.cart-n { color: #5a9424; font: 700 13px "Liberation Sans", sans-serif; }

.shop { display: flex; align-items: center; height: 67px; padding-bottom: 2px; }
.shop-name { font-size: 24.600px; font-weight: 500; color: #444; white-space: nowrap; line-height: 36px; }
.shop-chev { flex: none; width: 12px; height: 8px; margin: 6px 0 0 19px; }
.shop-act { display: flex; align-items: center; margin-top: 6px; color: #333; }
.shop-fav { margin-left: 64px; }
.shop-cert { margin-left: 49px; }
.heart { width: 16px; height: 15px; margin-right: 6px; }
.cert { width: 22px; height: 20px; margin-right: 7px; }

.mainnav { display: flex; height: 40px; background: #ed661c; }
.ni { display: flex; align-items: center; padding: 0 27px; color: #fff; font-size: 14px; }
.ni-1 { margin-left: 2.500px; }
.ni-2 { margin-left: 3px; }
.ni-9 { padding: 0 20px 0 18px; }
.ni-on { padding: 0 26px 0 23px; background: #5a9424; }

.content { display: flex; gap: 10px; margin-top: 10px; }
.side { display: flex; flex-direction: column; gap: 10px; flex: none; width: 280px; }
.box { border: 1px solid #e5e5e5; padding: 15px 10px 0 20px; }
.ttl { height: 20px; padding-left: 7px; border-left: 5px solid #5a9424; font-size: 15px; font-weight: 700; line-height: 20px; color: #333; }
.box-cat { height: 345px; }
.cat { margin-top: 12px; }
.cat li { height: 40px; padding-left: 12px; font-size: 14px; line-height: 40px; color: #333; }
.cat .cat-all { position: relative; padding-left: 28px; color: #5a9424; font-size: 15px; font-weight: 700; }
.cat-all::before { content: ""; position: absolute; left: 13px; top: 18px; width: 5px; height: 5px; background: #5a9424; }
.box-btn { display: flex; gap: 17px; height: 75px; padding: 21px 0 0 28px; }
.gbtn { display: flex; align-items: center; justify-content: center; width: 103px; height: 33px; border-radius: 5px; background: #3eac0b; color: #fff; font-size: 14px; }
.box-news { height: 550px; }
.news-head { display: flex; align-items: center; justify-content: space-between; }
.more { display: flex; align-items: center; color: #888; }
.more-ico { width: 13px; height: 11px; margin-left: 7px; }
.news { margin-top: 10px; }
.news li { position: relative; height: 35px; padding-left: 13px; font-size: 12px; line-height: 35px; color: #444; white-space: nowrap; }
.news li::before { content: ""; position: absolute; left: 0; top: 17px; width: 2px; height: 2px; background: #333; }
.dots { letter-spacing: 2.500px; }

.panel { flex: none; width: 900px; height: 990px; padding: 20px 33px 0 20px; border: 1px solid #e5e5e5; }
.ttl-panel { padding-left: 6px; }
.map { width: 832px; height: 452px; margin: 36px 0 0 13px; border: 4px solid #cfe0bf; }
.map-svg { display: block; width: 824px; height: 444px; }

.grid path { fill: none; stroke: #e9e7e2; stroke-width: 1; vector-effect: non-scaling-stroke; }
.water-fill { fill: #a5bfdf; }
.water path { fill: none; stroke: #a9c3e2; stroke-width: 3.500; vector-effect: non-scaling-stroke; }
.water-thin { fill: none; stroke: #c3d4e8; stroke-width: 1.500; vector-effect: non-scaling-stroke; }
.road-case path { fill: none; stroke: #ece2b4; stroke-width: 5; vector-effect: non-scaling-stroke; }
.road path { fill: none; stroke: #fdf6bb; stroke-width: 3.500; vector-effect: non-scaling-stroke; }
.road-y { fill: none; stroke: #fbee7a; stroke-width: 4; vector-effect: non-scaling-stroke; }
.hw-case { fill: none; stroke: #e6a65a; stroke-width: 12; vector-effect: non-scaling-stroke; }
.hw { fill: none; stroke: #f8bd6e; stroke-width: 9; vector-effect: non-scaling-stroke; }

.mt { font-family: "Noto Sans CJK SC", sans-serif; font-size: 13px; fill: #7b7b22; text-anchor: middle; dominant-baseline: central; }
.mc { fill: #666; }
.mg { fill: #4f8a63; }
.mk { fill: #222; font-size: 14px; font-weight: 500; }
.mo { fill: #a76d0c; font-size: 14px; font-weight: 500; }
.mh { fill: #7e4d05; font-size: 15px; font-weight: 700; }
.mh-l { font-size: 16px; }
.shield { fill: #fff; font: 700 11px "Liberation Sans", sans-serif; }
.slider { stroke: #6a8fcf; stroke-width: 5; fill: none; }
.slider-in { stroke: #fff; stroke-width: 2; fill: none; }
.slider-dash { stroke: #6a8fcf; stroke-width: 2; stroke-linecap: round; fill: none; }
.zbtn { fill: #fff; stroke: #c3cfe4; filter: drop-shadow(0 1px 1px #7a8db0); }
.zarrow { fill: none; stroke: #5a82c8; stroke-width: 1.500; }
.zsign { fill: none; stroke: #4a72bd; stroke-width: 2.500; }
.bd-bai { font: 700 20px "Liberation Sans", sans-serif; fill: #e10601; letter-spacing: -.5px; }
.bd-du { font: 700 11px "Liberation Sans", sans-serif; fill: #fff; text-anchor: middle; }
.bd-map { font: 700 12px "Noto Sans CJK SC", sans-serif; fill: #fff; text-anchor: middle; dominant-baseline: central; }
.bd-c { font: 15px "Liberation Sans", sans-serif; fill: #444; }

.contact { margin: 16px 0 0 13px; }
.row { display: flex; align-items: center; width: 830px; height: 60px; padding-top: 2px; border-bottom: 1px solid #e6e6e6; font-size: 14px; color: #444; }
.row:last-child { border-bottom: 0; }
.cico { flex: none; width: 34px; height: 34px; margin-right: 30px; fill: #3eac0b; }
.cico .w { fill: #fff; }
.lb { flex: none; width: 63px; margin-top: 2px; white-space: nowrap; }
.val { margin-top: 2px; }
.num { margin-top: 2px; font: 13px "Liberation Mono", monospace; letter-spacing: -.8px; color: #444; }

/* footer */
.services { position: relative; height: 71px; margin-top: 408px; color: #444; font-size: 16px; white-space: nowrap; }
.svc { position: absolute; top: 14px; display: flex; align-items: center; height: 27px; }
.svc-1 { left: 498px; }
.svc-2 { left: 688px; }
.svc-3 { left: 877px; }
.svc-4 { left: 1072px; }
.svc-5 { left: 1275px; }
.svc svg { fill: #2d8a13; }
.svc-truck { width: 40px; height: 26px; margin-right: 8px; overflow: visible; }
.svc-shield { width: 22px; height: 28px; margin-right: 10px; }
.shield-t { font-size: 13px; font-weight: 700; fill: #2d8a13; text-anchor: middle; dominant-baseline: central; }
.svc-gem { width: 30px; height: 26px; margin-right: 5px; }
.svc-bag { width: 23px; height: 30px; margin-right: 7px; }
.alipay { position: relative; display: block; width: 52px; height: 27px; margin-right: 7px; padding-top: 1px; }
.alipay-t { display: block; color: #1d4fa0; font-size: 16px; font-weight: 700; line-height: 20px; letter-spacing: .4px; }
.svc .alipay-s { position: absolute; left: 0; bottom: 1px; width: 52px; height: 10px; }

.footer { height: 181px; padding-top: 20px; background: #f4f4f4; color: #666; }
.fcols { display: flex; margin-left: 465px; height: 64px; margin-bottom: 27px; }
.fcol { display: flex; flex-direction: column; gap: 13px; width: 197px; padding: 7px 0 0 74px; border-right: 1px solid #d4d4d4; line-height: 17px; }
.fcol:last-child { border-right: 0; }
.copy { height: 19px; text-align: center; line-height: 19px; margin-left: 2px; }
```
